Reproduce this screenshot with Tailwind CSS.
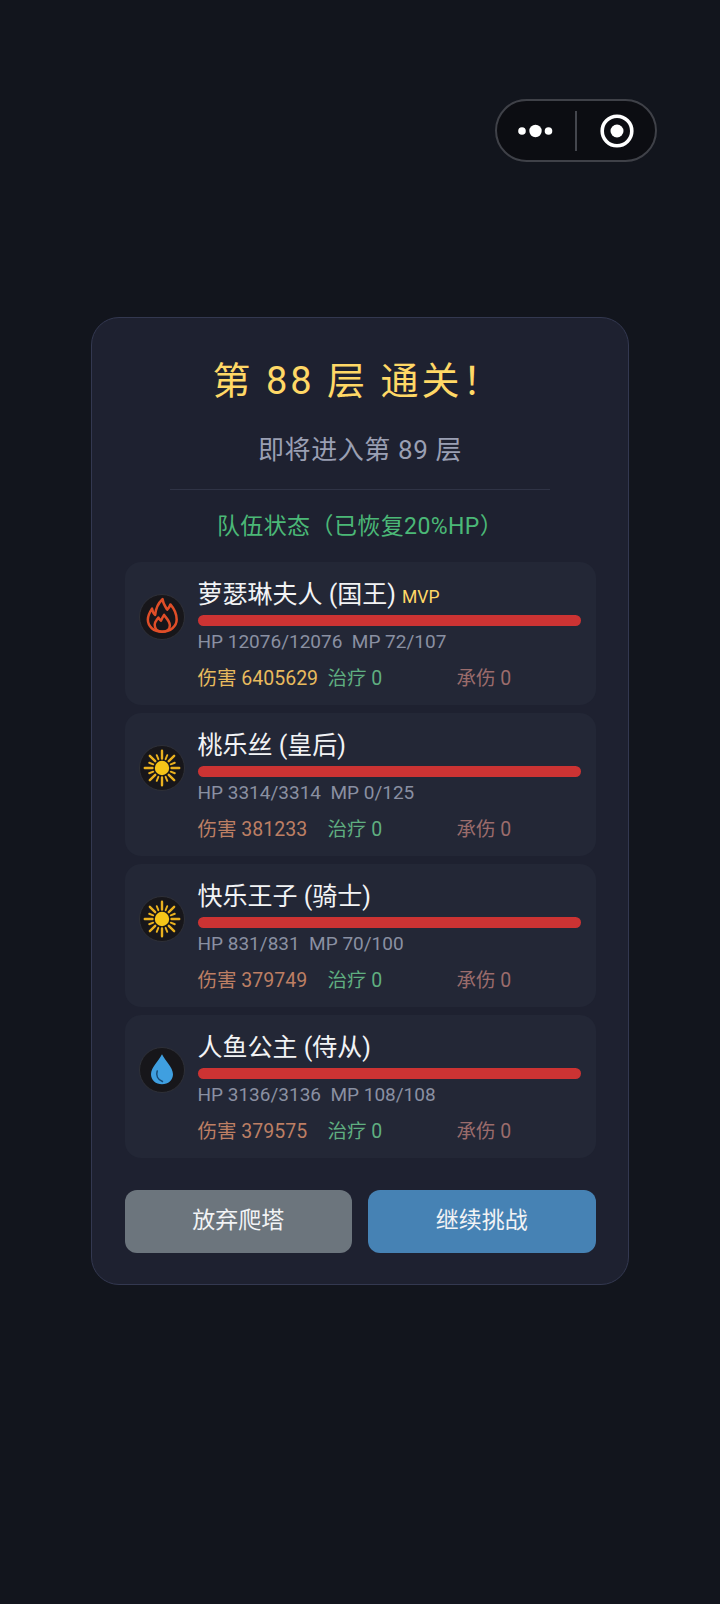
<!DOCTYPE html>
<html lang="zh-CN">

<head>
    <meta charset="UTF-8">
    <meta name="viewport" content="width=device-width, initial-scale=1.0">
    <title>爬塔</title>
    <script src="https://cdn.jsdelivr.net/npm/@tailwindcss/browser@4"></script>
</head>

<body class="bg-[#12151d] font-['Roboto','Noto_Sans_CJK_SC',sans-serif]">
    <section class="relative w-[720px] h-[1604px] pt-[317px] px-[91px]">

        <!-- capsule -->
        <div class="absolute left-[495px] top-[99px] w-[162px] h-[63px] rounded-full border-2 border-[#3f4148] bg-[#0c0d12]">
            <svg class="size-full" viewBox="0 0 158 59" fill="none">
                <circle cx="25" cy="30" r="3.800" fill="#fff" />
                <circle cx="38.500" cy="30" r="6.200" fill="#fff" />
                <circle cx="51.500" cy="30" r="3.800" fill="#fff" />
                <rect x="78" y="10" width="2" height="40" fill="#44464d" />
                <circle cx="120" cy="30" r="14.800" stroke="#fff" stroke-width="3.600" />
                <circle cx="120" cy="30" r="6.500" fill="#fff" />
            </svg>
        </div>

        <div class="w-[538px] h-[968px] rounded-[28px] border-[1.5px] border-[#333850] bg-[#1e2130] px-[32.5px] flex flex-col">
            <h1 class="mt-[36px] pr-[4px] text-center text-[38px] tracking-[3px] leading-[54px] font-normal text-[#ffd866]">第 88 层 通关！</h1>
            <p class="mt-[22px] text-center text-[26px] tracking-[0.6px] leading-[40px] text-[#9a9fb3]">即将进入第 89 层</p>
            <div class="mx-auto mt-[19px] w-[380px] h-px bg-[#2f3345]"></div>
            <p class="mt-[20px] text-center text-[23px] tracking-[0.4px] leading-[34px] text-[#4bb877]">队伍状态（已恢复20%HP）</p>

            <div class="mt-[18px] flex flex-col gap-[8.5px]">
                <div class="h-[142.5px] rounded-[16px] bg-[#232736] pl-[14px] pr-[15px] flex items-start">
                    <div class="mt-[32px] size-[46px] rounded-full border border-[#2e3038] bg-[#17161a] shrink-0">
                        <svg class="size-full" viewBox="2 2 42 42" fill="none" stroke="#e04e28" stroke-width="2.400" stroke-linejoin="round">
                            <path d="M23 37C15 37 9.500 32 9.500 25.500C9.500 21 11.500 18 13.500 15C14 18 15 20 16.500 21C17 15 19 10 23.500 6C24 10.500 26 13 28 16C29.500 14.500 30.500 13 31 11C34.500 15 37 20 37 25.500C37 32 31 37 23 37Z" />
                            <path d="M23 37C18.500 37 16 34 16 30.500C16 27.500 18 26 19.500 23.500C20.500 25 21 26 22 26.500C23 24.500 24 22.500 25 21C27 24 30.500 27 30.500 31C30.500 34.500 27.500 37 23 37Z" />
                        </svg>
                    </div>
                    <div class="ml-[13px] flex-1">
                        <div class="mt-[15px] flex items-baseline h-[36px]">
                            <span class="text-[25px] leading-[36px] text-[#f2f3f5]">萝瑟琳夫人 (国王)</span>
                            <span class="ml-[6px] text-[17.5px] leading-[24px] text-[#ffd866]">MVP</span>
                        </div>
                        <div class="mt-[2px] h-[11px] rounded-full bg-[#cc3333]"></div>
                        <p class="mt-[1px] text-[19px] leading-[30px] text-[#8a90a2]">HP 12076/12076&nbsp;&nbsp;MP 72/107</p>
                        <div class="mt-[7px] grid grid-cols-[130px_129px_1fr] text-[19.5px] leading-[30px]">
                            <span class="text-[#e8bb5e] whitespace-nowrap">伤害 6405629</span>
                            <span class="text-[#5fae80]">治疗 0</span>
                            <span class="text-[#9b6c6c]">承伤 0</span>
                        </div>
                    </div>
                </div>

                <div class="h-[142.5px] rounded-[16px] bg-[#232736] pl-[14px] pr-[15px] flex items-start">
                    <div class="mt-[32px] size-[46px] rounded-full border border-[#2e3038] bg-[#17161a] shrink-0">
                        <svg class="size-full" viewBox="0 0 46 46" fill="none" stroke="#eab11f" stroke-width="2.500" stroke-linecap="round">
                            <path d="M23 13V5M23 33V41M13 23H5M33 23H41M15.900 15.900L10.300 10.300M30.100 30.100L35.700 35.700M30.100 15.900L35.700 10.300M15.900 30.100L10.300 35.700" />
                            <path stroke-width="2" d="M26.800 13.800L28.500 9.600M19.200 13.800L17.500 9.600M26.800 32.200L28.500 36.400M19.200 32.200L17.500 36.400M13.800 19.200L9.600 17.500M13.800 26.800L9.600 28.500M32.200 19.200L36.400 17.500M32.200 26.800L36.400 28.500" />
                            <circle cx="23" cy="23" r="7.500" fill="#f5c518" stroke="none" />
                        </svg>
                    </div>
                    <div class="ml-[13px] flex-1">
                        <div class="mt-[15px] h-[36px] text-[25px] leading-[36px] text-[#f2f3f5]">桃乐丝 (皇后)</div>
                        <div class="mt-[2px] h-[11px] rounded-full bg-[#cc3333]"></div>
                        <p class="mt-[1px] text-[19px] leading-[30px] text-[#8a90a2]">HP 3314/3314&nbsp;&nbsp;MP 0/125</p>
                        <div class="mt-[7px] grid grid-cols-[130px_129px_1fr] text-[19.5px] leading-[30px]">
                            <span class="text-[#bd7f64] whitespace-nowrap">伤害 381233</span>
                            <span class="text-[#5fae80]">治疗 0</span>
                            <span class="text-[#9b6c6c]">承伤 0</span>
                        </div>
                    </div>
                </div>

                <div class="h-[142.5px] rounded-[16px] bg-[#232736] pl-[14px] pr-[15px] flex items-start">
                    <div class="mt-[32px] size-[46px] rounded-full border border-[#2e3038] bg-[#17161a] shrink-0">
                        <svg class="size-full" viewBox="0 0 46 46" fill="none" stroke="#eab11f" stroke-width="2.500" stroke-linecap="round">
                            <path d="M23 13V5M23 33V41M13 23H5M33 23H41M15.900 15.900L10.300 10.300M30.100 30.100L35.700 35.700M30.100 15.900L35.700 10.300M15.900 30.100L10.300 35.700" />
                            <path stroke-width="2" d="M26.800 13.800L28.500 9.600M19.200 13.800L17.500 9.600M26.800 32.200L28.500 36.400M19.200 32.200L17.500 36.400M13.800 19.200L9.600 17.500M13.800 26.800L9.600 28.500M32.200 19.200L36.400 17.500M32.200 26.800L36.400 28.500" />
                            <circle cx="23" cy="23" r="7.500" fill="#f5c518" stroke="none" />
                        </svg>
                    </div>
                    <div class="ml-[13px] flex-1">
                        <div class="mt-[15px] h-[36px] text-[25px] leading-[36px] text-[#f2f3f5]">快乐王子 (骑士)</div>
                        <div class="mt-[2px] h-[11px] rounded-full bg-[#cc3333]"></div>
                        <p class="mt-[1px] text-[19px] leading-[30px] text-[#8a90a2]">HP 831/831&nbsp;&nbsp;MP 70/100</p>
                        <div class="mt-[7px] grid grid-cols-[130px_129px_1fr] text-[19.5px] leading-[30px]">
                            <span class="text-[#bd7f64] whitespace-nowrap">伤害 379749</span>
                            <span class="text-[#5fae80]">治疗 0</span>
                            <span class="text-[#9b6c6c]">承伤 0</span>
                        </div>
                    </div>
                </div>

                <div class="h-[142.5px] rounded-[16px] bg-[#232736] pl-[14px] pr-[15px] flex items-start">
                    <div class="mt-[32px] size-[46px] rounded-full border border-[#2e3038] bg-[#17161a] shrink-0">
                        <svg class="size-full" viewBox="0 0 46 46" fill="none">
                            <path d="M23 6.500C20 13 11.500 20 11.500 27.500C11.500 33.500 16.500 38 23 38C29.500 38 34.500 33.500 34.500 27.500C34.500 20 26 13 23 6.500Z" fill="#3f9fe0" />
                            <path d="M18 24C16.500 28.500 18.500 33 23.500 35" stroke="#174a75" stroke-width="1.600" stroke-linecap="round" />
                        </svg>
                    </div>
                    <div class="ml-[13px] flex-1">
                        <div class="mt-[15px] h-[36px] text-[25px] leading-[36px] text-[#f2f3f5]">人鱼公主 (侍从)</div>
                        <div class="mt-[2px] h-[11px] rounded-full bg-[#cc3333]"></div>
                        <p class="mt-[1px] text-[19px] leading-[30px] text-[#8a90a2]">HP 3136/3136&nbsp;&nbsp;MP 108/108</p>
                        <div class="mt-[7px] grid grid-cols-[130px_129px_1fr] text-[19.5px] leading-[30px]">
                            <span class="text-[#bd7f64] whitespace-nowrap">伤害 379575</span>
                            <span class="text-[#5fae80]">治疗 0</span>
                            <span class="text-[#9b6c6c]">承伤 0</span>
                        </div>
                    </div>
                </div>
            </div>

            <div class="mt-[32px] grid grid-cols-2 gap-[16px]">
                <button class="h-[63px] rounded-[12px] bg-[#6c757d] text-[23px] text-[#f2f3f5]">放弃爬塔</button>
                <button class="h-[63px] rounded-[12px] bg-[#4682b4] text-[23px] text-[#f2f3f5]">继续挑战</button>
            </div>
        </div>
    </section>
</body>

</html>
